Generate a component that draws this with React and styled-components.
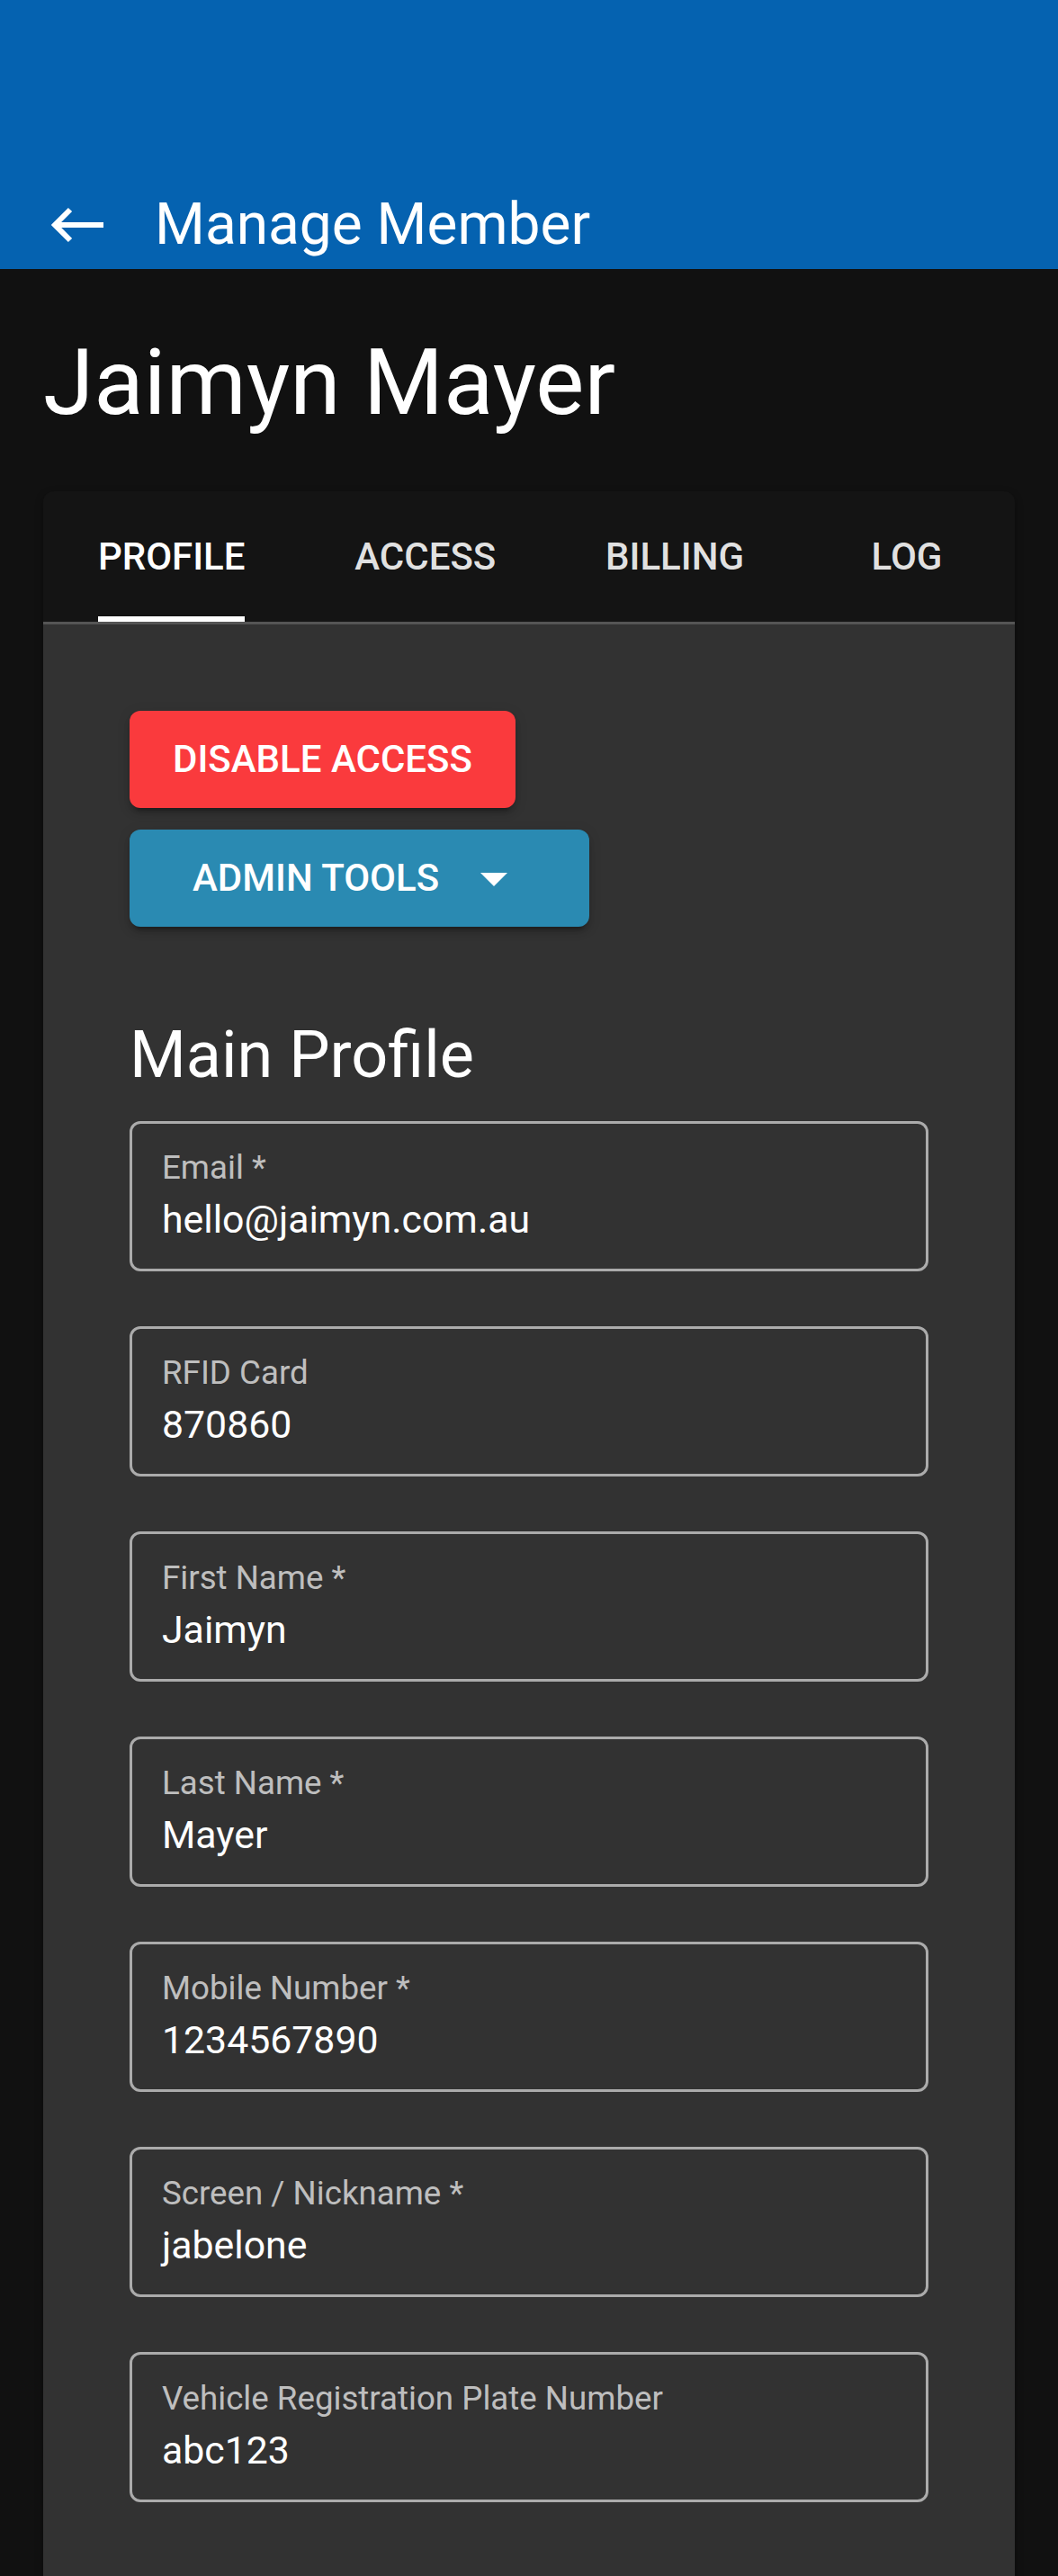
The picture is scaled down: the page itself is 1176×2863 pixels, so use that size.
import React from 'react';
import styled, { createGlobalStyle } from 'styled-components';

const GlobalStyle = createGlobalStyle`
    html, body {
        margin: 0;
        padding: 0;
        background: #111111;
        font-family: Roboto, "Liberation Sans", sans-serif;
        color: #ffffff;
    }
`;

const Page = styled.div`
    min-height: 2863px;
    background: #111111;
    overflow: hidden;
`;

const AppBar = styled.header`
    height: 299px;
    box-sizing: border-box;
    padding-top: 200px;
    background: #0562b0;
`;

const Toolbar = styled.div`
    height: 100px;
    display: flex;
    align-items: center;
    padding-left: 57px;
`;

const BackIcon = styled.svg`
    width: 58px;
    height: 40px;
    flex-shrink: 0;
`;

const AppTitle = styled.h1`
    margin: 0 0 0 57px;
    font-size: 64px;
    font-weight: 400;
    line-height: 1;
`;

const Content = styled.main`
    padding: 0 48px;
`;

const MemberName = styled.h2`
    margin: 75px 0 70px;
    font-size: 102px;
    font-weight: 400;
    line-height: 1;
`;

const Card = styled.section`
    border-radius: 12px 12px 0 0;
    overflow: hidden;
    box-shadow: 0 3px 9px rgba(0, 0, 0, 0.4);
`;

const TabBar = styled.nav`
    display: flex;
    height: 145px;
    background: #141414;
    border-bottom: 3px solid #555555;
`;

const Tab = styled.div`
    position: relative;
    min-width: 240px;
    box-sizing: border-box;
    padding: 0 61px;
    display: flex;
    align-items: center;
    justify-content: center;
    font-size: 42px;
    font-weight: 500;
    line-height: 1;
    text-transform: uppercase;
    color: ${(props) => props.active ? '#ffffff' : 'rgba(255, 255, 255, 0.88)'};
`;

const Indicator = styled.span`
    position: absolute;
    left: 61px;
    right: 61px;
    bottom: 0;
    height: 6px;
    background: #ffffff;
`;

const Body = styled.div`
    background: #323232;
    padding: 96px 96px 120px;
`;

const ButtonStack = styled.div`
    display: flex;
    flex-direction: column;
    align-items: flex-start;
    gap: 24px;
`;

const ActionButton = styled.button`
    height: 108px;
    padding: 0 ${(props) => props.pad || 48}px;
    display: flex;
    align-items: center;
    border: none;
    border-radius: 12px;
    background: ${(props) => props.bg};
    color: #ffffff;
    font-family: Roboto, "Liberation Sans", sans-serif;
    font-size: 42px;
    font-weight: 500;
    line-height: 1;
    text-transform: uppercase;
    box-shadow: 0 9px 3px -6px rgba(0, 0, 0, 0.2), 0 6px 6px 0 rgba(0, 0, 0, 0.14), 0 3px 15px 0 rgba(0, 0, 0, 0.12);
`;

const DropIcon = styled.svg`
    width: 72px;
    height: 72px;
    margin-left: 25px;
`;

const SectionTitle = styled.h3`
    margin: 107px 0 37px;
    font-size: 72px;
    font-weight: 400;
    line-height: 1;
`;

const FieldStack = styled.div`
    display: flex;
    flex-direction: column;
    gap: 61px;
`;

const Field = styled.div`
    height: 167px;
    box-sizing: border-box;
    border: 3px solid #ababab;
    border-radius: 12px;
    padding: 31px 33px 0;
`;

const FieldLabel = styled.div`
    font-size: 36.7px;
    line-height: 1;
    color: rgba(255, 255, 255, 0.7);
`;

const FieldValue = styled.div`
    margin-top: 17px;
    font-size: 42.8px;
    line-height: 1;
    color: #ffffff;
`;

const tabs = ['Profile', 'Access', 'Billing', 'Log'];

const fields = [
    { label: 'Email *', value: 'hello@jaimyn.com.au' },
    { label: 'RFID Card', value: '870860' },
    { label: 'First Name *', value: 'Jaimyn' },
    { label: 'Last Name *', value: 'Mayer' },
    { label: 'Mobile Number *', value: '1234567890' },
    { label: 'Screen / Nickname *', value: 'jabelone' },
    { label: 'Vehicle Registration Plate Number', value: 'abc123' },
];

const App = () => {
    return (
        <>
            <GlobalStyle />
            <Page>
                <AppBar>
                    <Toolbar>
                        <BackIcon viewBox="0 0 58 40">
                            <path d="M4 20 H58 M21 3 L4 20 L21 37" fill="none" stroke="#ffffff" strokeWidth="6" />
                        </BackIcon>
                        <AppTitle>Manage Member</AppTitle>
                    </Toolbar>
                </AppBar>
                <Content>
                    <MemberName>Jaimyn Mayer</MemberName>
                    <Card>
                        <TabBar>
                            {tabs.map((t, i) => (
                                <Tab key={t} active={i === 0}>
                                    {t}
                                    {i === 0 ? <Indicator /> : null}
                                </Tab>
                            ))}
                        </TabBar>
                        <Body>
                            <ButtonStack>
                                <ActionButton bg="#fa3a3d">Disable Access</ActionButton>
                                <ActionButton bg="#2a8ab2" pad={70}>
                                    Admin Tools
                                    <DropIcon viewBox="0 0 24 24">
                                        <path d="M7 10l5 5 5-5z" fill="#ffffff" />
                                    </DropIcon>
                                </ActionButton>
                            </ButtonStack>
                            <SectionTitle>Main Profile</SectionTitle>
                            <FieldStack>
                                {fields.map((f) => (
                                    <Field key={f.label}>
                                        <FieldLabel>{f.label}</FieldLabel>
                                        <FieldValue>{f.value}</FieldValue>
                                    </Field>
                                ))}
                            </FieldStack>
                        </Body>
                    </Card>
                </Content>
            </Page>
        </>
    );
}

export default App;
